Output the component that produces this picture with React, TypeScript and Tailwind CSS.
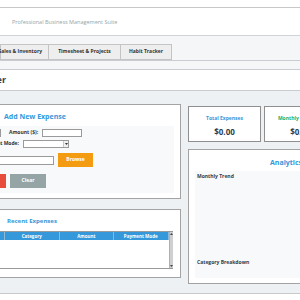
const font = "font-['Open_Sans','Liberation_Sans',sans-serif]";

function Tabs() {
    return (
        <div className="h-[25px] bg-[#f4f6f8] flex items-end border-b border-[#c9cdd1]">
            <div className="w-[49px] h-[16px] flex justify-end items-center whitespace-nowrap bg-[#eeeeee] border border-[#c4c4c4] pr-[6px] text-[5px] font-bold text-[#333]">
                Sales &amp; Inventory
            </div>
            <div className="w-[72px] h-[16px] flex justify-center items-center bg-[#eeeeee] border border-l-0 border-[#c4c4c4] text-[5px] font-bold text-[#333]">
                Timesheet &amp; Projects
            </div>
            <div className="w-[51px] h-[16px] flex justify-center items-center bg-[#eeeeee] border border-l-0 border-[#c4c4c4] text-[5px] font-bold text-[#333]">
                Habit Tracker
            </div>
        </div>
    );
}

function Input({ w }: { w: number }) {
    return <div className="h-[8px] bg-white border border-[#9a9a9a]" style={{ width: w }} />;
}

function AddExpense() {
    return (
        <div className="h-[95px] bg-white border border-[#a3a3a3] flex flex-col">
            <div className="h-[21px] pt-[4px] flex items-center pl-[103px]">
                <span className="text-[7px] font-bold text-[#3498db] whitespace-nowrap">Add New Expense</span>
            </div>
            <div className="h-[67px] mr-[6px] bg-[#f7f9fa] flex flex-col pt-[3px]">
                <div className="flex items-center ml-[50px] h-[8px]">
                    <Input w={50} />
                    <span className="ml-[8px] text-[5px] font-bold text-[#333] whitespace-nowrap">Amount ($):</span>
                    <div className="ml-[4px]"><Input w={40} /></div>
                </div>
                <div className="flex items-center ml-[66px] h-[8px] mt-[3px]">
                    <div className="w-[52px] flex justify-end">
                        <span className="text-[5px] font-bold text-[#333] whitespace-nowrap">Payment Mode:</span>
                    </div>
                    <div className="ml-[4px] w-[46px] h-[8px] bg-white border border-[#9a9a9a] flex justify-end">
                        <div className="w-[5px] h-full border-l border-[#c8c8c8] bg-[#f0f0f0] flex items-center justify-center">
                            <svg width="3" height="2" viewBox="0 0 3 2"><path d="M0 0h3L1.5 2z" fill="#333" /></svg>
                        </div>
                    </div>
                </div>
                <div className="flex items-center ml-[50px] h-[14px] mt-[5px]">
                    <div className="w-[103px] h-[9px] bg-white border border-[#9a9a9a]" />
                    <div className="ml-[4px] w-[35px] h-[14px] bg-[#f39c12] flex items-center justify-center text-[5px] font-bold text-white">Browse</div>
                </div>
                <div className="flex items-center ml-[69px] h-[14px] mt-[7px]">
                    <div className="w-[36px] h-[14px] bg-[#e74c3c] flex items-center justify-center text-[5px] font-bold text-white">Add</div>
                    <div className="ml-[4px] w-[36px] h-[14px] bg-[#95a5a6] flex items-center justify-center text-[5px] font-bold text-white">Clear</div>
                </div>
            </div>
        </div>
    );
}

function RecentExpenses() {
    const cols = ["Date", "Category", "Amount", "Payment Mode"];
    return (
        <div className="h-[69px] mt-[10px] bg-white border border-[#a3a3a3] flex flex-col">
            <div className="h-[21px] pt-[1px] flex items-center pl-[106px]">
                <span className="text-[6px] font-bold text-[#3498db] whitespace-nowrap">Recent Expenses</span>
            </div>
            <div className="ml-[48px] w-[224px] h-[38px] bg-white border border-[#9a9a9a] flex">
                <div className="flex-1 flex flex-col">
                    <div className="h-[8px] flex bg-[#3498db]">
                        {cols.map((c, i) => (
                            <div key={c} className={`flex items-center justify-center text-[4.5px] font-bold text-white border-r border-[#8fb8d8] ${i === 0 ? "w-[55px]" : "w-[54.5px]"}`}>
                                {c}
                            </div>
                        ))}
                    </div>
                </div>
                <div className="w-[5px] bg-[#cfcfcf] border-l border-[#b0b0b0] flex flex-col justify-between items-center py-[1px]">
                    <svg width="3" height="2" viewBox="0 0 3 2"><path d="M0 2h3L1.5 0z" fill="#444" /></svg>
                    <svg width="3" height="2" viewBox="0 0 3 2"><path d="M0 0h3L1.5 2z" fill="#444" /></svg>
                </div>
            </div>
        </div>
    );
}

function StatCard({ label, color }: { label: string; color: string }) {
    return (
        <div className="w-[73px] h-[36px] bg-white border border-[#8f8f8f] flex flex-col items-center pt-[8px]">
            <span className={`text-[5px] font-bold whitespace-nowrap ${color}`}>{label}</span>
            <span className="mt-[3px] text-[8px] font-bold text-[#2c3e50]">$0.00</span>
        </div>
    );
}

function Analytics() {
    return (
        <div className="mt-[7px] w-[200px] h-[135px] bg-white border border-[#a3a3a3] flex flex-col">
            <div className="h-[21px] flex items-center pl-[81px] pt-[5px]">
                <span className="text-[7px] font-bold text-[#3498db]">Analytics</span>
            </div>
            <div className="ml-[6px] h-[107px] bg-[#f7f9fa] flex flex-col justify-between pl-[2px] pt-[2px] pb-[12px]">
                <span className="text-[5px] font-bold text-[#2c3e50]">Monthly Trend</span>
                <span className="text-[5px] font-bold text-[#2c3e50]">Category Breakdown</span>
            </div>
        </div>
    );
}

export default function App() {
    return (
        <div className={`w-[300px] h-[300px] overflow-hidden flex flex-col bg-white ${font}`}>
            <div className="h-[8px] bg-white border-b border-[#c8c8c8]" />
            <div className="h-[28px] bg-white border-b border-[#cfd4d8] flex items-center pl-[12px] pt-[2px]">
                <span className="text-[5.5px] text-[#95a5a6] whitespace-nowrap">Professional Business Management Suite</span>
            </div>
            <Tabs />
            <div className="h-[8px] bg-[#f4f6f8]" />
            <div className="h-[22px] bg-white border-y border-[#c9cdd1] flex items-center">
                <div className="w-[6px] flex justify-end whitespace-nowrap">
                    <span className="text-[9px] font-bold text-[#2c3e50]">Expense Tracker</span>
                </div>
            </div>
            <div className="h-[202px] bg-[#eef1f3] flex">
                <div className="w-[281px] ml-[-100px] shrink-0 pt-[13px]">
                    <AddExpense />
                    <RecentExpenses />
                </div>
                <div className="ml-[7px] shrink-0 pt-[15px] flex flex-col">
                    <div className="flex gap-[3px]">
                        <StatCard label="Total Expenses" color="text-[#3498db]" />
                        <StatCard label="Monthly Expenses" color="text-[#27ae60]" />
                    </div>
                    <Analytics />
                </div>
            </div>
            <div className="flex-1 bg-white border-t border-[#c8c8c8]" />
        </div>
    );
}
